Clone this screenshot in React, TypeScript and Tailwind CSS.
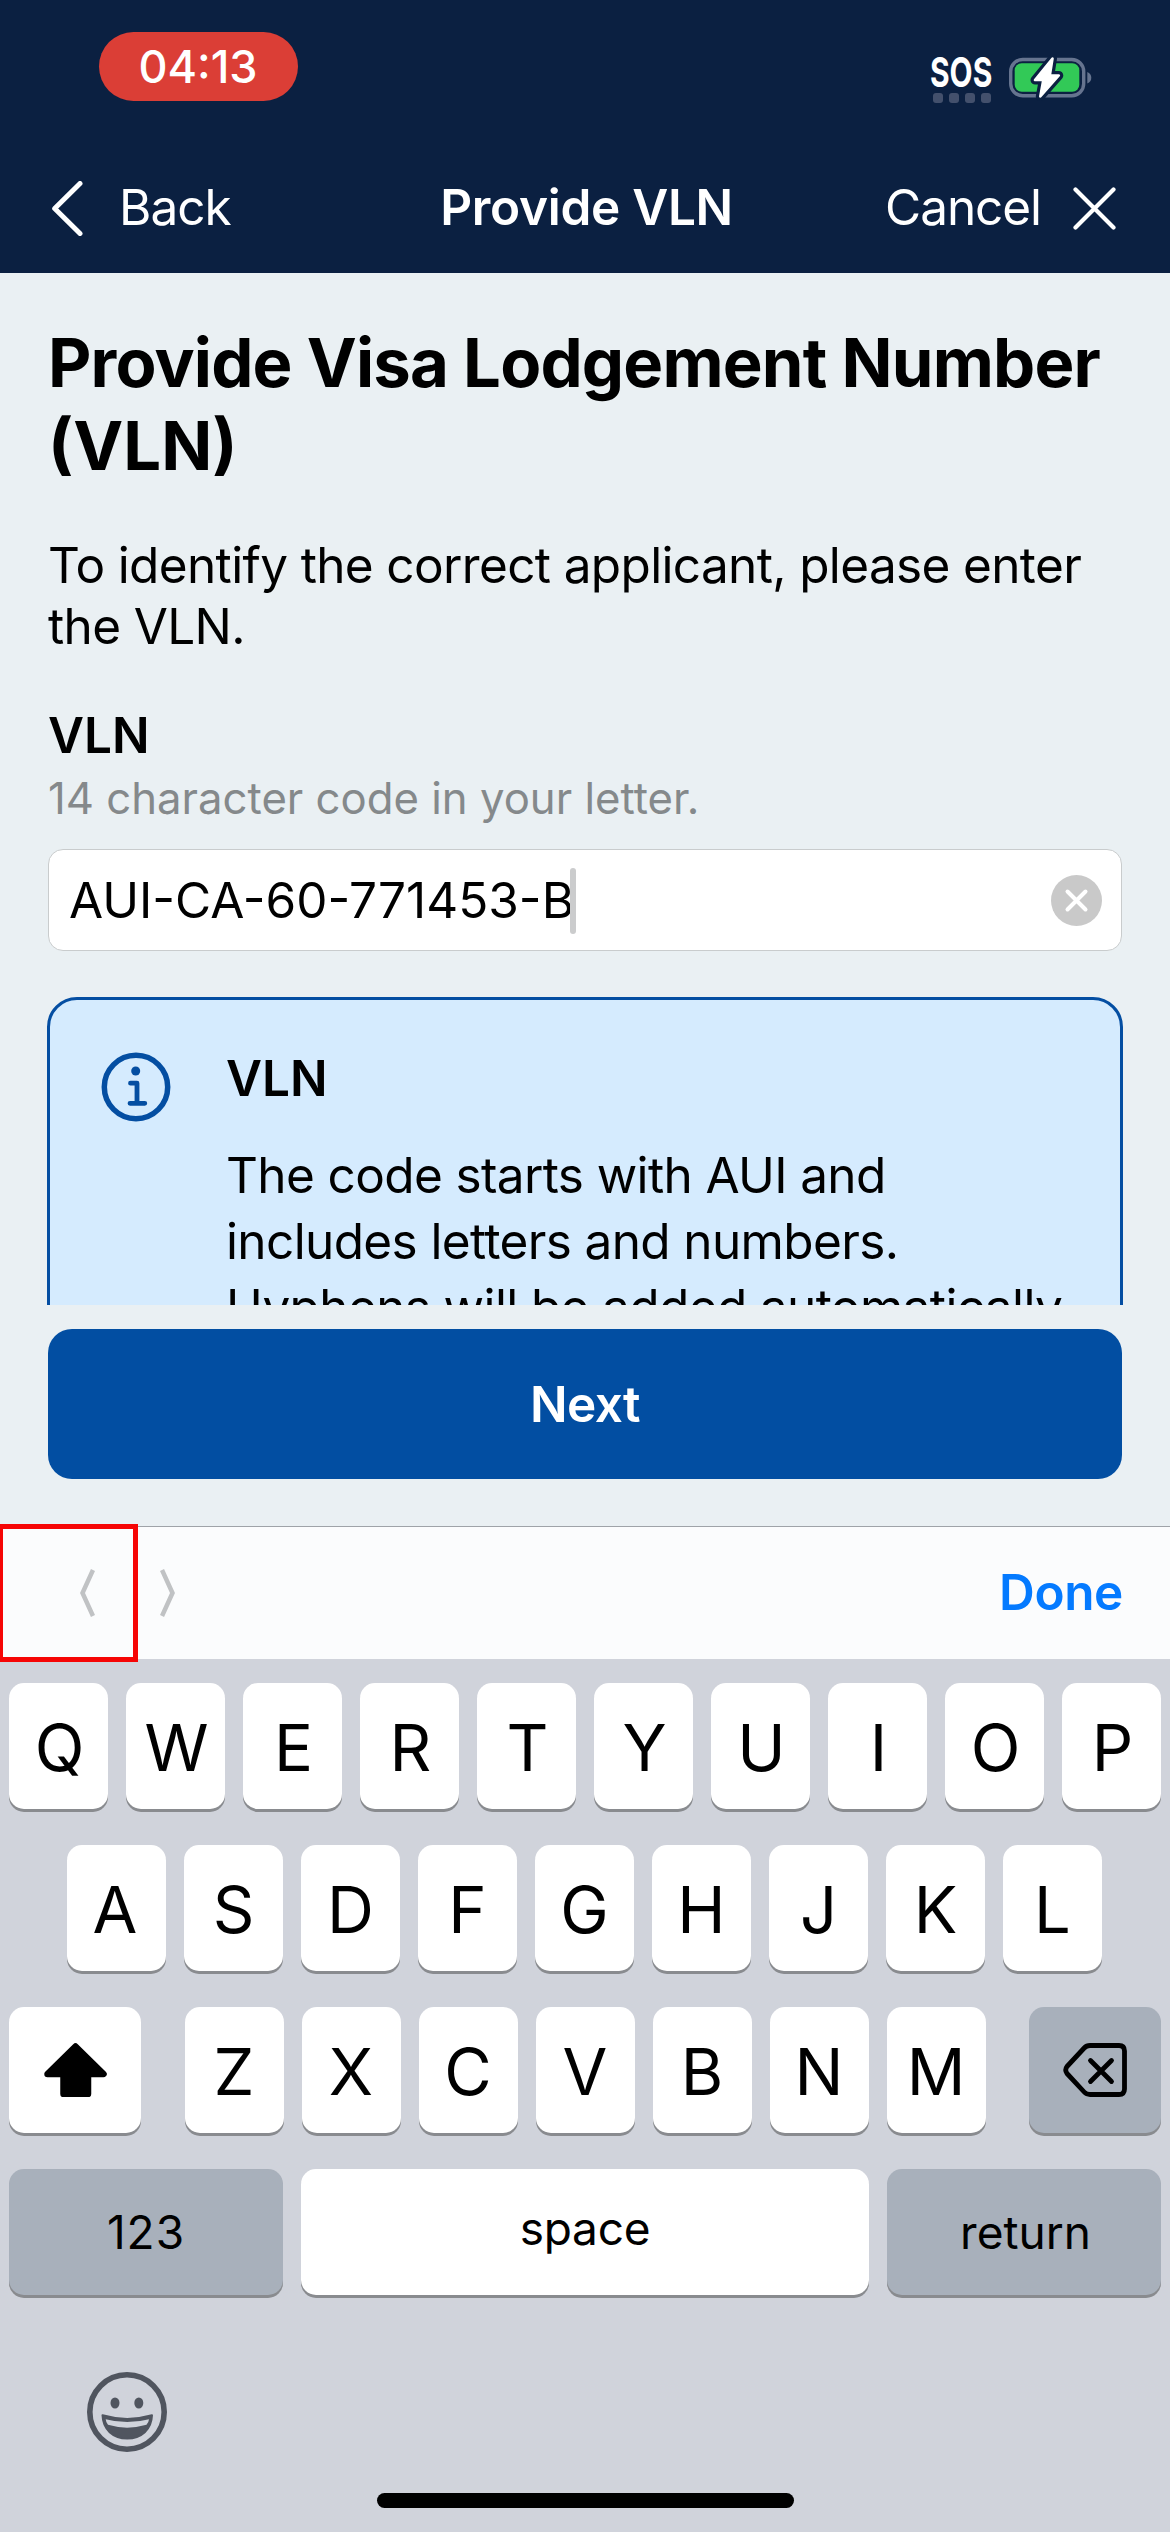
import type { ReactNode } from "react";

const TOP_ROW = ["Q", "W", "E", "R", "T", "Y", "U", "I", "O", "P"];
const HOME_ROW = ["A", "S", "D", "F", "G", "H", "J", "K", "L"];
const BOTTOM_ROW = ["Z", "X", "C", "V", "B", "N", "M"];

function BatteryIcon() {
  return (
    <svg width="88" height="48" viewBox="0 0 88 48" fill="none">
      <rect x="4.7" y="5.5" width="73" height="36.2" rx="12" stroke="#66748f" strokeWidth="3.4" />
      <rect x="8.7" y="9.3" width="64.6" height="28.4" rx="7" fill="#32c957" />
      <path d="M81.3 18c2.6.9 4 3 4 5.700s-1.400 4.800-4 5.700z" fill="#66748f" />
      <path
        d="M46.500 4.500L29 26H37.300L34.300 42.500L52.800 21.500H43.800Z"
        stroke="#0b2041"
        strokeWidth="9"
        strokeLinejoin="round"
      />
      <path
        d="M46.500 4.500L29 26H37.300L34.300 42.500L52.800 21.500H43.800Z"
        fill="#fff"
        stroke="#fff"
        strokeWidth="2.600"
        strokeLinejoin="round"
      />
    </svg>
  );
}

function InfoIcon() {
  return (
    <svg width="70" height="70" viewBox="0 0 70 70" fill="none" stroke="#044ea2" strokeLinecap="round" strokeLinejoin="round">
      <circle cx="35" cy="35" r="31.700" strokeWidth="5.500" />
      <circle cx="34.700" cy="19" r="4.500" fill="#044ea2" stroke="none" />
      <path d="M29.500 31.200H36V51.300M29 51.300H43.800" strokeWidth="4.800" />
    </svg>
  );
}

function EmojiIcon() {
  return (
    <svg width="80" height="80" viewBox="0 0 80 80">
      <circle cx="40" cy="40" r="37.200" fill="none" stroke="#50555f" strokeWidth="5.600" />
      <ellipse cx="28" cy="31" rx="4.500" ry="5.500" fill="#50555f" />
      <ellipse cx="51.800" cy="31" rx="4.500" ry="5.500" fill="#50555f" />
      <path
        d="M15.500 43.300Q40 50.500 65 43.300C64.500 57.500 54.500 66.500 40.200 66.500S16 57.500 15.500 43.300Z"
        fill="#50555f"
        stroke="#50555f"
        strokeWidth="2"
        strokeLinejoin="round"
      />
      <path d="M18.700 47.200Q40 53 62 47.200Q61.700 50.500 59.500 52.800Q40 58.500 21 52.800Q19 50.500 18.700 47.200Z" fill="#d0d3db" />
    </svg>
  );
}

function ShiftIcon() {
  return (
    <svg width="63" height="54" viewBox="0 0 63 54">
      <path
        d="M31.500 3.500L59.500 31H44V51H19.500V31H3.500Z"
        fill="#000"
        stroke="#000"
        strokeWidth="6.500"
        strokeLinejoin="round"
      />
    </svg>
  );
}

function DeleteIcon() {
  return (
    <svg width="65" height="54" viewBox="0 0 65 54" fill="none" stroke="#000" strokeWidth="4.800" strokeLinecap="round" strokeLinejoin="round">
      <path d="M27 2.500H56Q61.500 2.500 61.500 8V46Q61.500 51.500 56 51.500H27Q23.500 51.500 21.200 49L4 30.500Q1.400 27 4 23.500L21.200 5Q23.500 2.500 27 2.500Z" />
      <path d="M27.500 17.500L48.500 38.500M48.500 17.500L27.500 38.500" />
    </svg>
  );
}

function Key({ children, dark = false, className = "w-[99px]" }: { children: ReactNode; dark?: boolean; className?: string }) {
  return (
    <button
      className={`flex h-[126px] shrink-0 items-center justify-center rounded-[15px] shadow-[0_3px_0_#898b8f] ${
        dark ? "bg-[#a8b0bb]" : "bg-white"
      } ${className}`}
    >
      {children}
    </button>
  );
}

function Letter({ char, className = "" }: { char: string; className?: string }) {
  return (
    <Key>
      <span className={`pt-[3px] text-[65px] leading-none ${className}`}>{char}</span>
    </Key>
  );
}

function Header() {
  return (
    <header className="h-[273px] bg-[#0b2041] text-white">
      <div className="flex h-[143px] justify-between pr-[76px] pl-[98.5px]">
        <div className="mt-[32px] flex h-[69px] w-[199px] items-center justify-center rounded-full bg-[#db3e36] text-[45px] leading-none font-medium">
          04:13
        </div>
        <div className="flex pt-[54px]">
          <div className="w-[76px]">
            <div className="h-[39px] origin-left scale-x-[0.73] text-[41px] leading-[36px] font-bold">SOS</div>
            <div className="flex gap-[6px] pl-[3px]">
              {[0, 1, 2, 3].map((dot) => (
                <span key={dot} className="size-[10px] rounded-[3px] bg-[#43506c]" />
              ))}
            </div>
          </div>
          <BatteryIcon />
        </div>
      </div>
      <nav className="grid h-[130px] grid-cols-[1fr_auto_1fr] items-center pr-[54px] pl-[52px] text-[49.5px] leading-none">
        <button className="flex items-center gap-[36px] tracking-[-0.99px]">
          <svg width="31" height="55" viewBox="0 0 31 55" fill="none" stroke="#fff" strokeWidth="5" strokeLinecap="round" strokeLinejoin="round">
            <path d="M28 2.500L2.700 27.500L28 52.500" />
          </svg>
          Back
        </button>
        <h1 className="pl-[5px] font-semibold tracking-[-0.29px]">Provide VLN</h1>
        <button className="flex items-center justify-end gap-[32px] tracking-[-1.07px]">
          Cancel
          <svg width="43" height="43" viewBox="0 0 43 43" fill="none" stroke="#fff" strokeWidth="4.200" strokeLinecap="round">
            <path d="M2.500 2.500L40.500 40.500M40.500 2.500L2.500 40.500" />
          </svg>
        </button>
      </nav>
    </header>
  );
}

function Content() {
  return (
    <main className="h-[1032px] overflow-hidden px-[48px] pt-[48px]">
      <h2 className="text-[67px] leading-[83px] font-bold whitespace-nowrap">
        <span className="tracking-[-0.82px]">Provide Visa Lodgement Number</span>
        <br />
        (VLN)
      </h2>
      <p className="mt-[48px] text-[49.5px] leading-[61px] tracking-[-0.64px] whitespace-nowrap">
        To identify the correct applicant, please enter
        <br />
        the VLN.
      </p>
      <label className="mt-[48px] block text-[49.5px] leading-[60px] font-semibold">VLN</label>
      <p className="mt-[4px] text-[43.7px] leading-[60px] text-[#85898b]">14 character code in your letter.</p>
      <div className="mt-[20px] flex h-[102px] items-center justify-between rounded-[15px] border border-[#c9cccd] bg-white pt-px pr-[19px] pl-[20px]">
        <div className="flex items-center">
          <span className="text-[49.5px] leading-none">AUI-CA-60-771453-B</span>
          <span className="-ml-[4px] h-[66px] w-[6px] rounded-full bg-[#cbcccd]" />
        </div>
        <svg width="51" height="51" viewBox="0 0 51 51">
          <circle cx="25.500" cy="25.500" r="25.500" fill="#c9c9c9" />
          <path d="M16.500 16.500L34.500 34.500M34.500 16.500L16.500 34.500" stroke="#fff" strokeWidth="4" strokeLinecap="round" />
        </svg>
      </div>
      <section className="-mx-px mt-[46px] flex h-[420px] rounded-[30px] border-[3px] border-[#044ea2] bg-[#d5ebfe] pl-[51px]">
        <div className="w-[125px] shrink-0 pt-[52px]">
          <InfoIcon />
        </div>
        <div className="pt-[48px] text-[49.5px]">
          <h3 className="leading-[60px] font-semibold">VLN</h3>
          <p className="mt-[34px] leading-[66px] tracking-[-0.62px] whitespace-nowrap">
            The code starts with AUI and
            <br />
            includes letters and numbers.
            <br />
            Hyphens will be added automatically
          </p>
        </div>
      </section>
    </main>
  );
}

function Keyboard() {
  return (
    <div className="flex h-[873px] flex-col bg-[#d0d3db] pt-[24px]">
      <div className="flex flex-col gap-[36px] px-[9px]">
        <div className="flex gap-[18px]">
          {TOP_ROW.map((char) => (
            <Letter key={char} char={char} className="pl-[2px]" />
          ))}
        </div>
        <div className="-ml-px flex justify-center gap-[18px]">
          {HOME_ROW.map((char) => (
            <Letter key={char} char={char} className={char === "A" ? "pr-[3px]" : ""} />
          ))}
        </div>
        <div className="flex justify-between">
          <Key className="w-[132px]">
            <ShiftIcon />
          </Key>
          <div className="flex gap-[18px]">
            {BOTTOM_ROW.map((char) => (
              <Letter key={char} char={char} />
            ))}
          </div>
          <Key dark className="w-[132px]">
            <DeleteIcon />
          </Key>
        </div>
        <div className="flex gap-[18px] text-[46px] leading-none">
          <Key dark className="w-[274px]">
            <span className="tracking-[1px]">123</span>
          </Key>
          <Key className="w-[568px]">
            <span className="pb-[8px] tracking-[-0.25px]">space</span>
          </Key>
          <Key dark className="w-[274px]">
            <span className="pl-[3px]">return</span>
          </Key>
        </div>
      </div>
      <div className="mt-[77px] pl-[87px]">
        <EmojiIcon />
      </div>
      <div className="mx-auto mt-[41px] h-[15px] w-[417px] rounded-full bg-black" />
    </div>
  );
}

export default function App() {
  return (
    <div className="relative h-[2532px] w-[1170px] overflow-hidden bg-[#eaf0f3] font-['Inter',sans-serif] text-black">
      <Header />
      <Content />
      <div className="h-[221px] px-[48px] pt-[24px]">
        <button className="flex h-[150px] w-full items-center justify-center rounded-[24px] bg-[#024ea2] pt-[2px] text-[49.5px] leading-none font-semibold tracking-[-0.59px] text-white">
          Next
        </button>
      </div>
      <div className="flex h-[133px] items-center justify-between border-t border-[#9fa3a8] bg-[#fbfcfd] pr-[47px] pl-[79px]">
        <div className="flex gap-[65px]">
          <svg width="16" height="48" viewBox="0 0 16 48" fill="none" stroke="#c0c2c4" strokeWidth="4.500">
            <path d="M14 1L3.500 24L14 47" />
          </svg>
          <svg width="16" height="48" viewBox="0 0 16 48" fill="none" stroke="#c0c2c4" strokeWidth="4.500">
            <path d="M2 1L12.500 24L2 47" />
          </svg>
        </div>
        <button className="text-[49.5px] leading-none font-semibold tracking-[-0.39px] text-[#047aff]">Done</button>
      </div>
      <Keyboard />
      <div className="absolute top-[1524px] -left-[2px] h-[138px] w-[140px] border-[5px] border-[#f60505]" />
    </div>
  );
}
